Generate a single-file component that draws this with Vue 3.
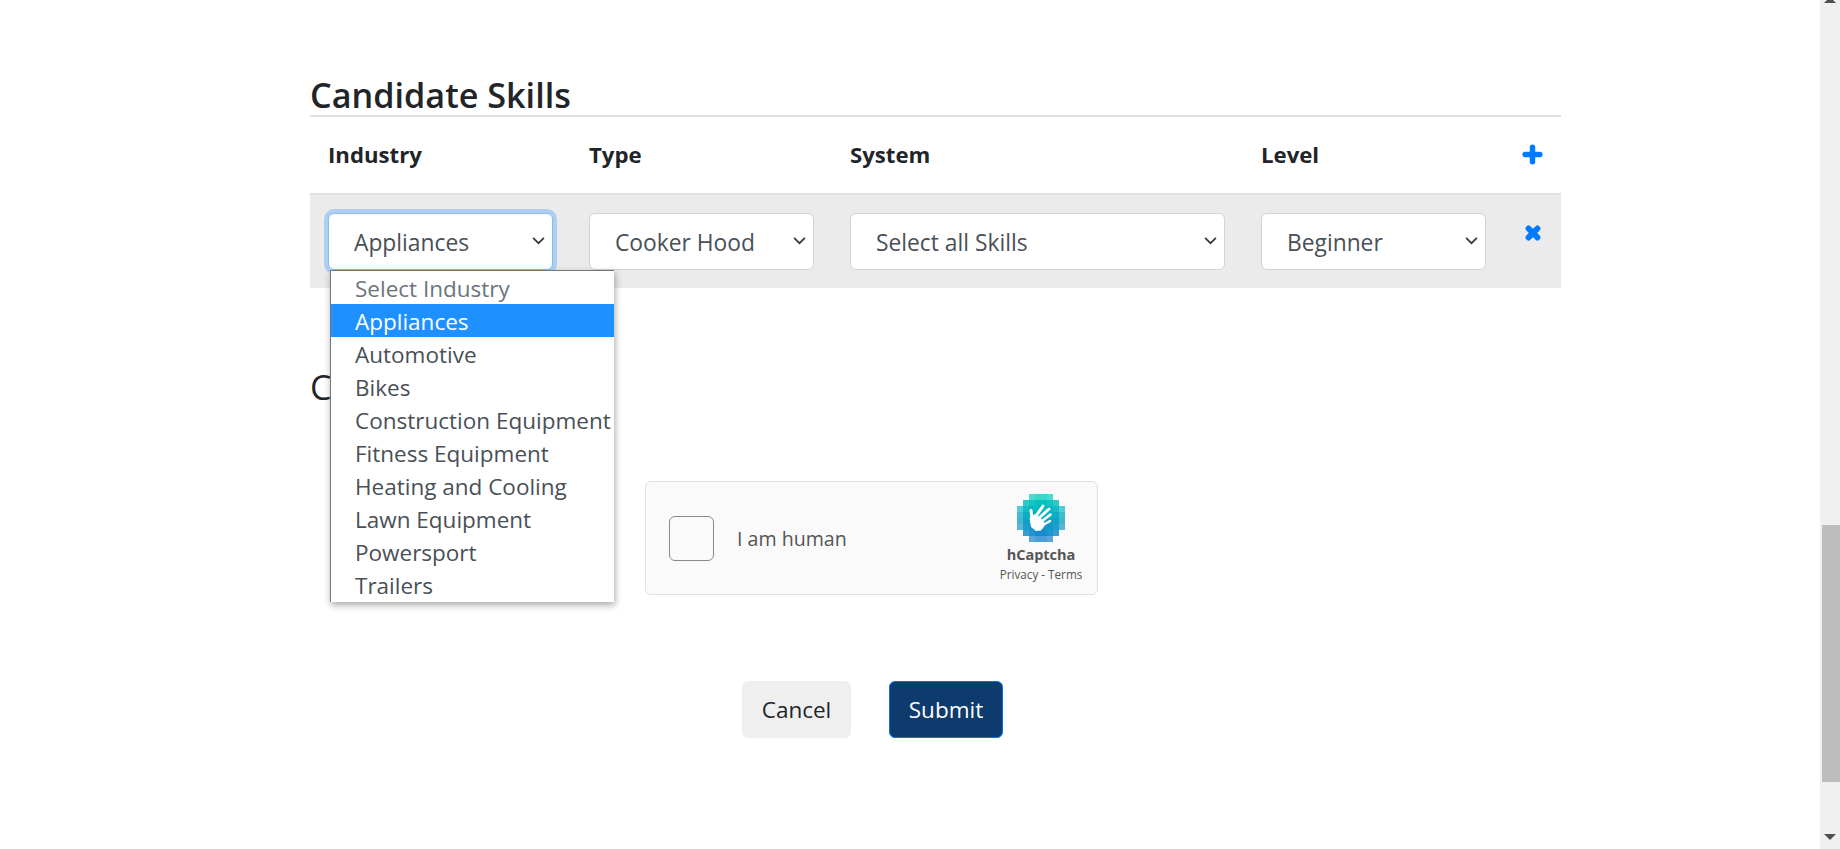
<script setup>
const items = ['Select Industry','Appliances','Automotive','Bikes','Construction Equipment','Fitness Equipment','Heating and Cooling','Lawn Equipment','Powersport','Trailers']
const rows = [[2,5],[1,6],[0,7],[0,7],[0,7],[0,7],[1,6],[2,5]]
const cells = []
rows.forEach(([a,b],y)=>{
  for(let x=a;x<=b;x++){
    const t=y/7
    const r=Math.round(0+t*25), g=Math.round(205-t*75), b2=Math.round(190+t*15)
    const dx=Math.abs(x-3.5), dy=Math.abs(y-3.5)
    const d=Math.max(dx+dy*0.35,dy+dx*0.35)
    const o=Math.min(1,Math.max(0.5,1.7-d*0.25))
    cells.push({x:x*6,y:y*6,fill:`rgb(${r},${g},${b2})`,o})
  }
})
</script>

<template>
  <div class="page">
    <main class="content">
      <h3 class="title">Candidate Skills</h3>
      <div class="grid head">
        <div>Industry</div><div>Type</div><div>System</div><div>Level</div>
        <div class="icon-cell">
          <svg viewBox="0 0 20 20" width="21" height="21"><path d="M7.4 3a2.6 2.6 0 0 1 5.2 0V7.4H17a2.6 2.6 0 0 1 0 5.2H12.6V17a2.6 2.6 0 0 1-5.2 0V12.6H3a2.6 2.6 0 0 1 0-5.2H7.4z" fill="#007bff"/></svg>
        </div>
      </div>
      <div class="grid row">
        <div class="field">
          <div class="select focus"><span>Appliances</span><svg class="chev" viewBox="0 0 12 8"><path d="M1 1.5l5 5 5-5" fill="none" stroke="#343a40" stroke-width="1.6"/></svg></div>
          <ul class="menu">
            <li v-for="(it,i) in items" :key="it" :class="{ sel: i===1, ph: i===0 }">{{ it }}</li>
          </ul>
        </div>
        <div class="select"><span>Cooker Hood</span><svg class="chev" viewBox="0 0 12 8"><path d="M1 1.5l5 5 5-5" fill="none" stroke="#343a40" stroke-width="1.6"/></svg></div>
        <div class="select"><span>Select all Skills</span><svg class="chev" viewBox="0 0 12 8"><path d="M1 1.5l5 5 5-5" fill="none" stroke="#343a40" stroke-width="1.6"/></svg></div>
        <div class="select"><span>Beginner</span><svg class="chev" viewBox="0 0 12 8"><path d="M1 1.5l5 5 5-5" fill="none" stroke="#343a40" stroke-width="1.6"/></svg></div>
        <div class="icon-cell x">
          <svg viewBox="0 0 16 16" width="18" height="18"><path d="M1.9 5.6a2.2 2.2 0 0 1 0-3.1l.6-.6a2.2 2.2 0 0 1 3.1 0L8 4.3l2.4-2.4a2.2 2.2 0 0 1 3.1 0l.6.6a2.2 2.2 0 0 1 0 3.1L11.7 8l2.4 2.4a2.2 2.2 0 0 1 0 3.1l-.6.6a2.2 2.2 0 0 1-3.1 0L8 11.7l-2.4 2.4a2.2 2.2 0 0 1-3.1 0l-.6-.6a2.2 2.2 0 0 1 0-3.1L4.3 8z" fill="#007bff"/></svg>
        </div>
      </div>
      <h3 class="title second">Captcha</h3>
      <div class="captcha-wrap">
        <div class="captcha">
          <div class="check"></div>
          <div class="human">I am human</div>
          <div class="brand">
            <svg class="logo" viewBox="0 0 48 48" width="48" height="48">
              <rect v-for="(c,i) in cells" :key="i" :x="c.x" :y="c.y" width="6" height="6" :fill="c.fill" :opacity="c.o"/>
              <g fill="none" stroke="#fff" stroke-linecap="round">
                <path d="M19 22 L26 12" stroke-width="3"/>
                <path d="M22 24 L32 15" stroke-width="3"/>
                <path d="M25 27 L33.5 20.5" stroke-width="2.6"/>
                <path d="M26 31 L33 27" stroke-width="2.4"/>
                <path d="M15 24 L14 16.5" stroke-width="3"/>
              </g>
              <path d="M12.5 24 L18 20 L27 27 L27.5 32 L24 36.5 L19 37 L14 33 Z" fill="#fff"/>
            </svg>
            <div class="hc">hCaptcha</div>
            <div class="terms">Privacy - Terms</div>
          </div>
        </div>
      </div>
      <div class="actions">
        <button class="btn cancel">Cancel</button>
        <button class="btn submit">Submit</button>
      </div>
    </main>
    <aside class="scrollbar">
      <svg class="arrow up" viewBox="0 0 20 20" width="20" height="20"><path d="M10 -3 L16 3 L4 3 Z" fill="#505050"/></svg>
      <div class="thumb"></div>
      <svg class="arrow" viewBox="0 0 20 20" width="20" height="20"><path d="M4 5 L16 5 L10 11 Z" fill="#505050"/></svg>
    </aside>
  </div>
</template>

<style>
html, body { margin: 0; padding: 0; overflow: hidden; background: #fff; }
</style>

<style scoped>
.page { display: flex; height: 849px; width: 1840px; overflow: hidden; font-family: "Open Sans", "Noto Sans", sans-serif; color: #212529; }
.content { flex: 1; padding: 0 259px 0 310px; min-width: 0; }
.title { margin: 0; padding-top: 74px; height: 41px; border-bottom: 2px solid #dee2e6; font-size: 34.2px; line-height: 42px; font-weight: 600; white-space: nowrap; }
.title.second { border: 0; padding-top: 0; margin-top: 78px; height: 42px; font-weight: 500; }
.grid { display: grid; grid-template-columns: 261px 261px 411px 261px 1fr; }
.grid > * { padding: 0 18px; }
.head { align-items: center; padding-bottom: 2px; font-size: 22.2px; font-weight: 700; border-bottom: 2px solid #dee2e6; box-sizing: border-box; height: 78px; }
.row { background: #ebebeb; height: 93px; padding-top: 18px; box-sizing: border-box; align-items: start; }
.field { position: relative; }
.select { box-sizing: border-box; height: 57px; width: 100%; display: flex; align-items: center; justify-content: space-between; background: #fff; border: 1px solid #ced4da; border-radius: 6px; padding: 0 7px 0 25px; font-size: 22.8px; color: #495057; }
.row > .select { width: auto; margin: 0 18px; padding: 0 7px 0 25px; }
.select span { position: relative; top: 1px; }
.focus { border-color: #80bdff; box-shadow: 0 0 0 4px rgba(0,123,255,.25); }
.chev { width: 13px; height: 9px; margin-top: -3px; }
.menu { position: absolute; z-index: 5; left: 20px; top: 57px; margin: 0; padding: 0; list-style: none; width: 284px; height: 332px; box-sizing: border-box; background: #fff; border: 1px solid #767676; border-right: 0; border-bottom: 0; box-shadow: 1px 3px 7px rgba(0,0,0,.35); font-size: 22.5px; color: #495057; overflow: hidden; }
.menu li { height: 33px; line-height: 35px; padding-left: 24px; white-space: nowrap; }
.menu .sel { background: #1e90ff; color: #fff; }
.menu .ph { color: #6c757d; }
.icon-cell { display: flex; justify-content: center; }
.x { padding-top: 11px !important; }
.captcha-wrap { padding: 73px 0 0 335px; }
.captcha { box-sizing: border-box; width: 453px; height: 114px; background: #fafafa; border: 1px solid #e0e0e0; border-radius: 6px; display: flex; align-items: center; padding: 0 15px 0 23px; }
.check { width: 45px; height: 45px; box-sizing: border-box; background: #fafafa; border: 1px solid #8a8a8a; border-radius: 6px; }
.human { margin-left: 23px; font-size: 19.6px; color: #555; flex: 1; }
.brand { display: flex; flex-direction: column; align-items: center; width: 82px; }
.logo { display: block; }
.hc { font-size: 14.5px; font-weight: 700; color: #555; line-height: 20px; margin-top: 3px; }
.terms { font-size: 11.7px; color: #555; line-height: 18px; white-space: nowrap; }
.actions { display: flex; gap: 38px; padding: 86px 0 0 432px; }
.btn { box-sizing: border-box; height: 57px; border-radius: 6px; font-family: inherit; font-size: 22.5px; padding: 0; }
.cancel { width: 109px; background: #efefef; border: 1px solid #efefef; color: #212529; }
.submit { width: 114px; background: #0d3b6e; border: 1px solid #0d6efd; color: #fff; }
.scrollbar { width: 20px; flex: none; background: #f0f0f0; display: flex; flex-direction: column; height: 849px; }
.arrow { display: block; flex: none; }
.arrow.up { overflow: visible; margin-bottom: 505px; }
.thumb { width: 18px; margin-left: 2px; height: 257px; background: #bdbdbd; margin-bottom: 47px; }
</style>
